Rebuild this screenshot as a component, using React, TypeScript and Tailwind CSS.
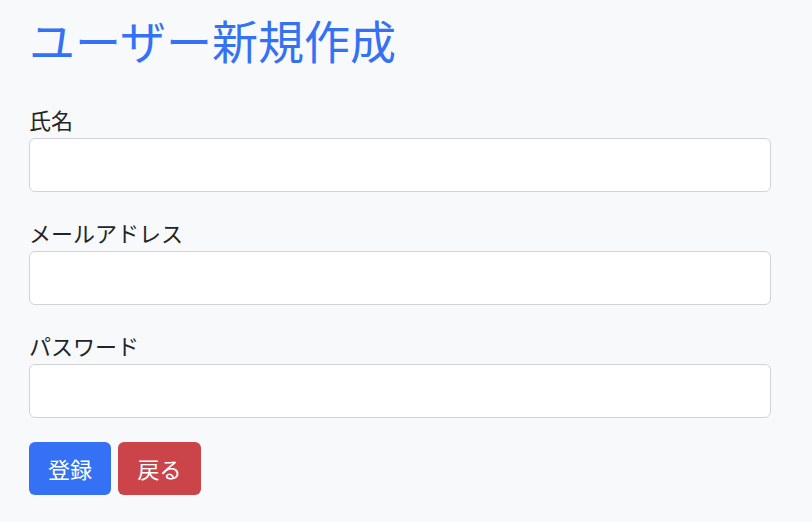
import React from "react";

export default function App() {
  const fields = ["氏名", "メールアドレス", "パスワード"];
  return (
    <div className="min-h-[522px] w-[812px] bg-[#f8f9fa] pl-[29px] pt-[12px] font-['Noto_Sans_CJK_JP','Noto_Sans',sans-serif] text-[#212529]">
      <h1 className="text-[46px] leading-[54px] text-[#3572f3] font-normal">ユーザー新規作成</h1>
      <form className="mt-[40px] flex flex-col w-[742px]">
        {fields.map((f, i) => (
          <div key={f} className={i === 0 ? "flex flex-col" : "flex flex-col mt-[27px]"}>
            <label className="text-[22px] leading-[26px] mb-[6px]">{f}</label>
            <input
              type={i === 2 ? "password" : "text"}
              className="h-[54px] w-full rounded-[6px] border border-[#ced4da] bg-white px-3 outline-none"
            />
          </div>
        ))}
        <div className="mt-[24px] flex gap-[7px]">
          <button type="button" className="h-[53px] w-[82px] rounded-[6px] bg-[#3571f5] text-[22px] text-white">
            登録
          </button>
          <button type="button" className="h-[53px] w-[83px] rounded-[6px] bg-[#cb444a] text-[22px] text-white">
            戻る
          </button>
        </div>
      </form>
    </div>
  );
}
